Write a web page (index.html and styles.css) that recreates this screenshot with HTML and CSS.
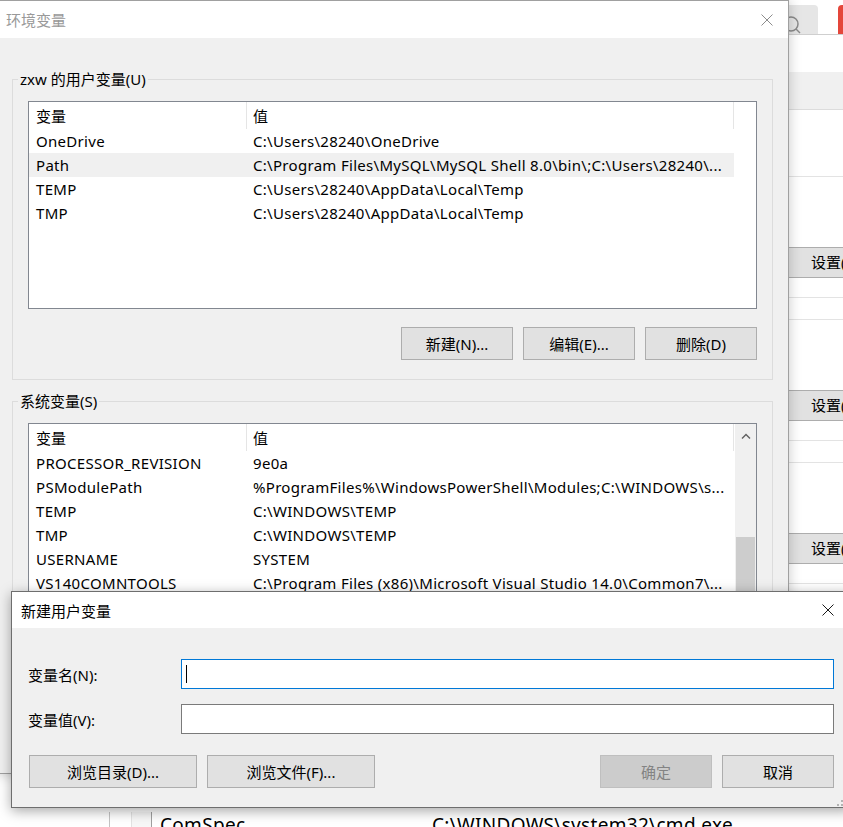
FILE: index.html
```html
<html lang="zh-CN">
	<head>
		<meta charset="utf-8">
		<link rel="stylesheet" href="styles.css">
	</head>
	<body>
		<div class="desktop">
			<!-- settings window, mostly hidden behind the dialogs -->
			<div class="settings">
				<div class="settings__top">
					<div class="settings__search">
						<svg class="settings__glass" width="24" height="24" viewBox="0 0 24 24">
							<circle cx="11" cy="12" r="7" fill="none" stroke="#8a8a8a" stroke-width="1.5"/>
							<path d="M16 17 L20 21" stroke="#8a8a8a" stroke-width="1.5"/>
						</svg>
					</div>
					<div class="settings__red"></div>
				</div>
				<div class="settings__gap"></div>
				<div class="settings__band"></div>
				<div class="settings__rule settings__rule--tall"></div>
				<div class="settings__spacer"></div>
				<div class="settings__section">
					<div class="settings__button">设置(S)...</div>
					<div class="settings__rule"></div>
					<div class="settings__rule settings__rule--mid"></div>
					<div class="settings__spacer"></div>
				</div>
				<div class="settings__section">
					<div class="settings__button">设置(S)...</div>
					<div class="settings__rule"></div>
					<div class="settings__rule settings__rule--mid"></div>
					<div class="settings__spacer"></div>
				</div>
				<div class="settings__section">
					<div class="settings__button">设置(S)...</div>
					<div class="settings__rule"></div>
				</div>
			</div>

			<!-- system variables window behind, bottom edge -->
			<div class="backwin">
				<div class="backwin__row">
					<div class="backwin__gutter"></div>
					<div class="backwin__edge"></div>
					<div class="backwin__edge backwin__edge--inner"></div>
					<div class="backwin__list">
						<span class="backwin__name">ComSpec</span>
						<span>C:\WINDOWS\system32\cmd.exe</span>
					</div>
				</div>
			</div>

			<div class="envdlg">
				<div class="titlebar">
					<div class="titlebar__text">环境变量</div>
					<div class="titlebar__close">
						<svg width="12" height="12" viewBox="0 0 12 12"><path d="M0.5 0.5 L11.5 11.5 M11.5 0.5 L0.5 11.5" stroke="#8c8c8c" stroke-width="1"/></svg>
					</div>
				</div>
				<div class="envdlg__body">
					<fieldset class="group">
						<legend class="group__label">zxw 的用户变量(U)</legend>
						<div class="lv">
							<div class="lv__table">
								<div class="lv__head">
									<div class="lv__cell lv__cell--name">变量</div>
									<div class="lv__cell lv__cell--value">值</div>
								</div>
								<div class="lv__row">
									<div class="lv__cell lv__cell--name">OneDrive</div>
									<div class="lv__cell lv__cell--value">C:\Users\28240\OneDrive</div>
								</div>
								<div class="lv__row lv__row--selected">
									<div class="lv__cell lv__cell--name">Path</div>
									<div class="lv__cell lv__cell--value">C:\Program Files\MySQL\MySQL Shell 8.0\bin\;C:\Users\28240\...</div>
								</div>
								<div class="lv__row">
									<div class="lv__cell lv__cell--name">TEMP</div>
									<div class="lv__cell lv__cell--value">C:\Users\28240\AppData\Local\Temp</div>
								</div>
								<div class="lv__row">
									<div class="lv__cell lv__cell--name">TMP</div>
									<div class="lv__cell lv__cell--value">C:\Users\28240\AppData\Local\Temp</div>
								</div>
							</div>
						</div>
						<div class="actions">
							<button type="button" class="btn">新建(N)...</button>
							<button type="button" class="btn">编辑(E)...</button>
							<button type="button" class="btn">删除(D)</button>
						</div>
					</fieldset>
					<fieldset class="group">
						<legend class="group__label">系统变量(S)</legend>
						<div class="lv lv--tall">
							<div class="lv__table">
								<div class="lv__head">
									<div class="lv__cell lv__cell--name">变量</div>
									<div class="lv__cell lv__cell--value">值</div>
								</div>
								<div class="lv__row">
									<div class="lv__cell lv__cell--name">PROCESSOR_REVISION</div>
									<div class="lv__cell lv__cell--value">9e0a</div>
								</div>
								<div class="lv__row">
									<div class="lv__cell lv__cell--name">PSModulePath</div>
									<div class="lv__cell lv__cell--value">%ProgramFiles%\WindowsPowerShell\Modules;C:\WINDOWS\s...</div>
								</div>
								<div class="lv__row">
									<div class="lv__cell lv__cell--name">TEMP</div>
									<div class="lv__cell lv__cell--value">C:\WINDOWS\TEMP</div>
								</div>
								<div class="lv__row">
									<div class="lv__cell lv__cell--name">TMP</div>
									<div class="lv__cell lv__cell--value">C:\WINDOWS\TEMP</div>
								</div>
								<div class="lv__row">
									<div class="lv__cell lv__cell--name">USERNAME</div>
									<div class="lv__cell lv__cell--value">SYSTEM</div>
								</div>
								<div class="lv__row">
									<div class="lv__cell lv__cell--name">VS140COMNTOOLS</div>
									<div class="lv__cell lv__cell--value">C:\Program Files (x86)\Microsoft Visual Studio 14.0\Common7\...</div>
								</div>
								<div class="lv__row">
									<div class="lv__cell lv__cell--name">windir</div>
									<div class="lv__cell lv__cell--value">C:\WINDOWS</div>
								</div>
							</div>
							<div class="scrollbar">
								<div class="scrollbar__arrow">
									<svg width="10" height="6" viewBox="0 0 10 6"><path d="M1 5.5 L5 1.5 L9 5.5" fill="none" stroke="#606060" stroke-width="1.4"/></svg>
								</div>
								<div class="scrollbar__thumb"></div>
							</div>
						</div>
					</fieldset>
				</div>
			</div>

			<div class="newdlg">
				<div class="titlebar">
					<div class="titlebar__text">新建用户变量</div>
					<div class="titlebar__close">
						<svg width="12" height="12" viewBox="0 0 12 12"><path d="M0.5 0.5 L11.5 11.5 M11.5 0.5 L0.5 11.5" stroke="#1a1a1a" stroke-width="1"/></svg>
					</div>
				</div>
				<div class="newdlg__body">
					<div class="form">
						<div class="form__label">变量名(N):</div>
						<div class="field field--focus"><span class="field__caret"></span></div>
						<div class="form__label">变量值(V):</div>
						<div class="field"></div>
					</div>
					<div class="actions actions--dialog">
						<button type="button" class="btn btn--wide">浏览目录(D)...</button>
						<button type="button" class="btn btn--wide">浏览文件(F)...</button>
						<button type="button" class="btn actions__push" disabled>确定</button>
						<button type="button" class="btn">取消</button>
					</div>
				</div>
				<svg class="grip" width="12" height="12" viewBox="0 0 12 12">
					<rect x="9" y="1" width="2" height="2" fill="#b4b4b4"/>
					<rect x="5" y="5" width="2" height="2" fill="#b4b4b4"/>
					<rect x="9" y="5" width="2" height="2" fill="#b4b4b4"/>
					<rect x="1" y="9" width="2" height="2" fill="#b4b4b4"/>
					<rect x="5" y="9" width="2" height="2" fill="#b4b4b4"/>
					<rect x="9" y="9" width="2" height="2" fill="#b4b4b4"/>
				</svg>
			</div>
		</div>
	</body>
</html>
```

FILE: styles.css
```css
* {
	box-sizing: border-box;
}
body {
	margin: 0;
	width: 843px;
	height: 827px;
	overflow: hidden;
	background: #fff;
	font-family: "Noto Sans", "Noto Sans CJK SC", sans-serif;
	font-size: 15px;
	color: #000;
}
.desktop {
	position: relative;
	width: 843px;
	height: 827px;
	overflow: hidden;
}

/* settings window in the back */
.settings {
	position: absolute;
	left: 740px;
	top: 0;
	width: 200px;
	height: 827px;
	background: #fff;
}
.settings__top {
	display: flex;
	gap: 20px;
	height: 35px;
	padding-top: 5px;
	border-bottom: 1px solid #cfcfcf;
}
.settings__search {
	width: 78px;
	height: 29px;
	background: #e6e6e6;
	border-radius: 0 4px 0 0;
	overflow: hidden;
}
.settings__glass {
	display: block;
	margin: 7px 0 0 40px;
}
.settings__red {
	width: 40px;
	height: 29px;
	background: #e4463a;
	border-radius: 4px 0 0 0;
}
.settings__gap {
	height: 37px;
}
.settings__band {
	height: 38px;
	background: #f0f0f0;
	border-bottom: 1px solid #dcdcdc;
}
.settings__rule {
	height: 20px;
	border-bottom: 1px solid #e3e3e3;
}
.settings__rule--mid {
	height: 22px;
}
.settings__rule--tall {
	height: 67px;
}
.settings__spacer {
	height: 70px;
}
.settings__button {
	height: 31px;
	line-height: 29px;
	padding-left: 71px;
	background: #e1e1e1;
	border-top: 1px solid #adadad;
	border-bottom: 1px solid #adadad;
	white-space: nowrap;
}

/* bottom edge of the window behind */
.backwin {
	position: absolute;
	left: 0;
	top: 773px;
	width: 843px;
	height: 54px;
	padding-top: 39px;
	background: #fff;
	z-index: 1;
}
.backwin__row {
	display: flex;
	height: 40px;
}
.backwin__gutter {
	width: 109px;
}
.backwin__edge {
	width: 22px;
	border-left: 1px solid #c4c4c4;
}
.backwin__edge--inner {
	width: 20px;
	border-left-color: #e3e3e3;
	background: #f7f7f7;
}
.backwin__list {
	flex: 1;
	display: flex;
	padding-left: 8px;
	border-left: 1px solid #a0a0a0;
	font-size: 19px;
	line-height: 26px;
	letter-spacing: 0.3px;
	white-space: nowrap;
}
.backwin__name {
	width: 272px;
}

/* shared window parts */
.titlebar {
	display: flex;
	align-items: center;
	height: 37px;
	padding-left: 9px;
	background: #fff;
}
.titlebar__text {
	flex: 1;
}
.titlebar__close {
	display: flex;
	align-items: center;
	justify-content: center;
	width: 42px;
	height: 100%;
}
.btn {
	width: 112px;
	height: 33px;
	padding: 0;
	border: 1px solid #adadad;
	background: #e1e1e1;
	font: inherit;
	color: #000;
}
.btn--wide {
	width: 168px;
}
.btn:disabled {
	background: #cccccc;
	border-color: #bfbfbf;
	color: #838383;
}
.actions {
	display: flex;
	justify-content: flex-end;
	gap: 10px;
	margin-top: 18px;
}

/* 环境变量 */
.envdlg {
	position: absolute;
	left: -4px;
	top: 0;
	width: 793px;
	height: 774px;
	border: 1px solid #a0a0a0;
	background: #f0f0f0;
	box-shadow: 0 0 12px rgba(0,0,0,0.22);
	overflow: hidden;
	z-index: 2;
}
.envdlg .titlebar__text {
	color: #999;
}
.envdlg__body {
	padding: 31px 15px 0;
}
.group {
	margin: 0;
	padding: 12px 15px 19px;
	border: 1px solid #dcdcdc;
	min-width: 0;
}
.group + .group {
	margin-top: 11px;
}
.group__label {
	margin-left: -10px;
	padding: 0 2px;
	line-height: 20px;
}
.lv {
	display: flex;
	height: 208px;
	border: 1px solid #828790;
	background: #fff;
	overflow: hidden;
}
.lv--tall {
	height: 360px;
}
.lv__table {
	flex: 1;
}
.lv__head {
	display: flex;
	height: 27px;
	line-height: 28px;
}
.lv__row {
	display: flex;
	width: 705px;
	height: 24px;
	line-height: 24px;
}
.lv__row--selected {
	background: #f0f0f0;
}
.lv__cell {
	padding-left: 7px;
	letter-spacing: 0.3px;
	white-space: nowrap;
	overflow: hidden;
}
.lv__cell--name {
	width: 218px;
}
.lv__cell--value {
	width: 487px;
	padding-left: 6px;
}
.lv__head .lv__cell {
	border-right: 1px solid #e5e5e5;
	letter-spacing: 0;
}
.scrollbar {
	flex-shrink: 0;
	width: 21px;
	background: #f0f0f0;
}
.scrollbar__arrow {
	display: flex;
	align-items: center;
	justify-content: center;
	height: 24px;
}
.scrollbar__thumb {
	height: 120px;
	margin: 89px 1px 0;
	background: #cdcdcd;
}

/* 新建用户变量 */
.newdlg {
	position: absolute;
	left: 11px;
	top: 591px;
	width: 841px;
	height: 217px;
	border: 1px solid #6e6e6e;
	background: #f0f0f0;
	box-shadow: 0 3px 12px rgba(0,0,0,0.35);
	z-index: 3;
}
.newdlg .titlebar {
	height: 36px;
}
.newdlg .titlebar__close {
	width: 46px;
}
.newdlg__body {
	padding: 31px 17px 0;
}
.form {
	display: grid;
	grid-template-columns: 152px 1fr;
	align-items: center;
	row-gap: 15px;
}
.form__label {
	margin-left: -1px;
}
.field {
	display: flex;
	align-items: center;
	height: 30px;
	border: 1px solid #7a7a7a;
	background: #fff;
}
.field--focus {
	border-color: #0078d7;
}
.field__caret {
	width: 1px;
	height: 18px;
	margin-left: 4px;
	background: #000;
}
.actions--dialog {
	justify-content: flex-start;
	margin-top: 21px;
}
.actions__push {
	margin-left: auto;
}
.grip {
	position: absolute;
	right: 3px;
	bottom: 0;
}
```
